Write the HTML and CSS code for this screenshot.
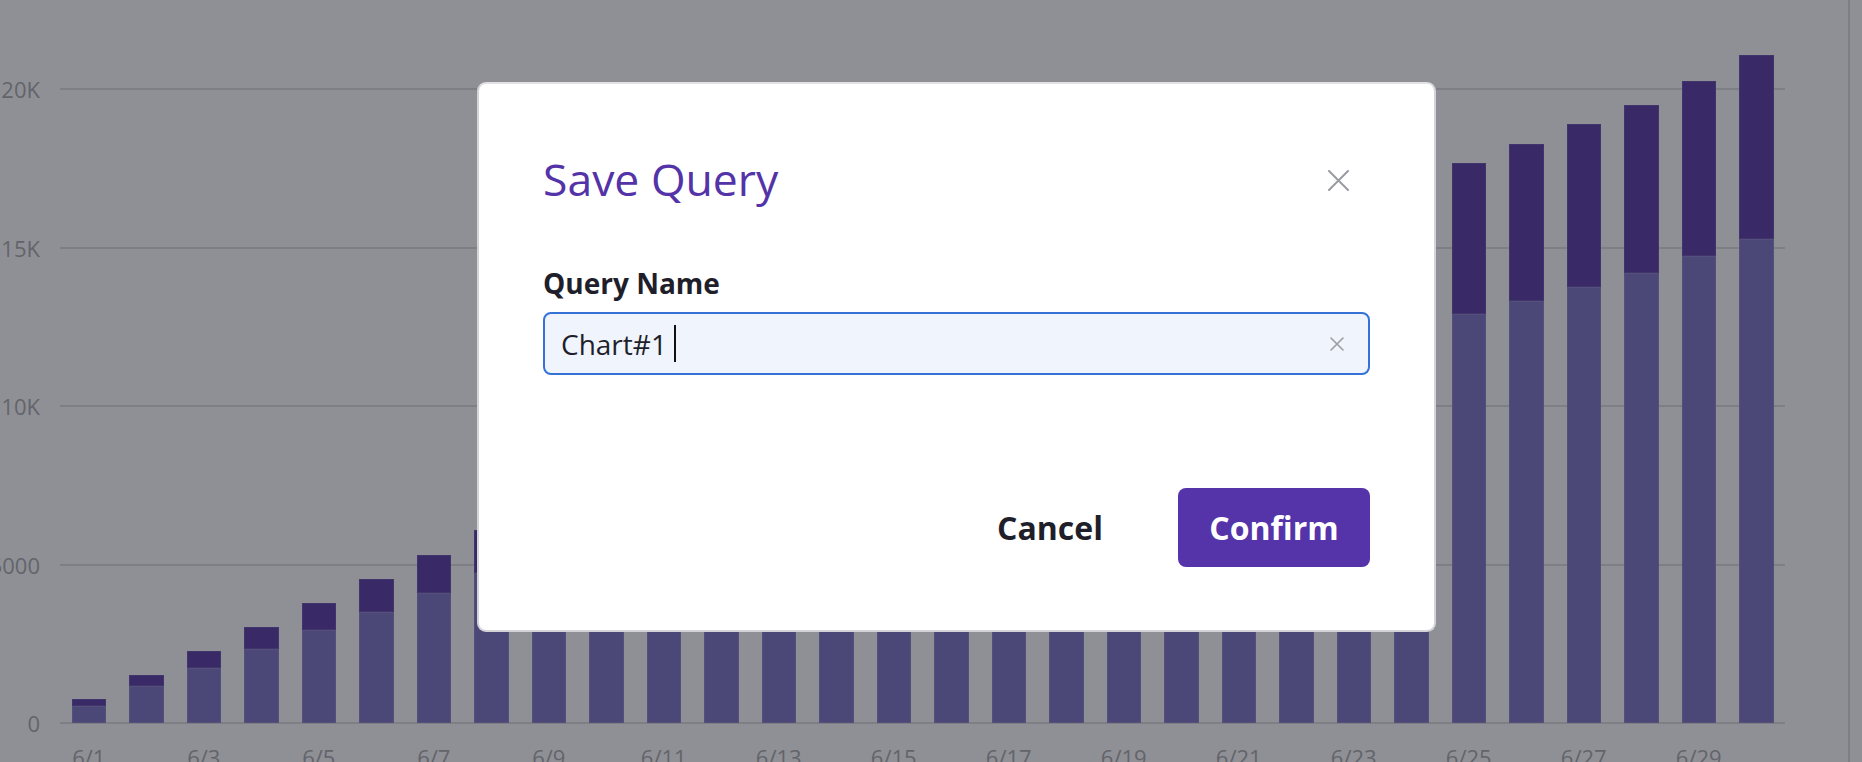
FILE: index.html
```html
<!DOCTYPE html>
<html lang="en">
<head>
<meta charset="utf-8">
<title>Save Query</title>
<link rel="stylesheet" href="styles.css">
</head>
<body>
<div class="chart">
  <div class="y-axis">
    <div class="y-label">20K</div>
    <div class="y-label">15K</div>
    <div class="y-label">10K</div>
    <div class="y-label">5000</div>
    <div class="y-label">0</div>
  </div>
  <div class="plot-wrap">
    <div class="plot">
      <div class="gridlines">
        <div class="gridline"></div>
        <div class="gridline"></div>
        <div class="gridline"></div>
        <div class="gridline"></div>
        <div class="gridline"></div>
      </div>
      <div class="bars">
        <div class="bar" style="height:24px"><div class="seg-top"></div><div class="seg-low" style="height:17px"></div></div>
        <div class="bar" style="height:48px"><div class="seg-top"></div><div class="seg-low" style="height:37px"></div></div>
        <div class="bar" style="height:72px"><div class="seg-top"></div><div class="seg-low" style="height:55px"></div></div>
        <div class="bar" style="height:96px"><div class="seg-top"></div><div class="seg-low" style="height:74px"></div></div>
        <div class="bar" style="height:120px"><div class="seg-top"></div><div class="seg-low" style="height:93px"></div></div>
        <div class="bar" style="height:144px"><div class="seg-top"></div><div class="seg-low" style="height:111px"></div></div>
        <div class="bar" style="height:168px"><div class="seg-top"></div><div class="seg-low" style="height:130px"></div></div>
        <div class="bar" style="height:193px"><div class="seg-top"></div><div class="seg-low" style="height:150px"></div></div>
        <div class="bar" style="height:215px"><div class="seg-top"></div><div class="seg-low" style="height:165px"></div></div>
        <div class="bar" style="height:236px"><div class="seg-top"></div><div class="seg-low" style="height:180px"></div></div>
        <div class="bar" style="height:258px"><div class="seg-top"></div><div class="seg-low" style="height:196px"></div></div>
        <div class="bar" style="height:280px"><div class="seg-top"></div><div class="seg-low" style="height:211px"></div></div>
        <div class="bar" style="height:301px"><div class="seg-top"></div><div class="seg-low" style="height:226px"></div></div>
        <div class="bar" style="height:323px"><div class="seg-top"></div><div class="seg-low" style="height:241px"></div></div>
        <div class="bar" style="height:344px"><div class="seg-top"></div><div class="seg-low" style="height:257px"></div></div>
        <div class="bar" style="height:366px"><div class="seg-top"></div><div class="seg-low" style="height:272px"></div></div>
        <div class="bar" style="height:388px"><div class="seg-top"></div><div class="seg-low" style="height:287px"></div></div>
        <div class="bar" style="height:409px"><div class="seg-top"></div><div class="seg-low" style="height:302px"></div></div>
        <div class="bar" style="height:431px"><div class="seg-top"></div><div class="seg-low" style="height:317px"></div></div>
        <div class="bar" style="height:452px"><div class="seg-top"></div><div class="seg-low" style="height:333px"></div></div>
        <div class="bar" style="height:474px"><div class="seg-top"></div><div class="seg-low" style="height:348px"></div></div>
        <div class="bar" style="height:496px"><div class="seg-top"></div><div class="seg-low" style="height:363px"></div></div>
        <div class="bar" style="height:517px"><div class="seg-top"></div><div class="seg-low" style="height:378px"></div></div>
        <div class="bar" style="height:539px"><div class="seg-top"></div><div class="seg-low" style="height:394px"></div></div>
        <div class="bar" style="height:560px"><div class="seg-top"></div><div class="seg-low" style="height:409px"></div></div>
        <div class="bar" style="height:579px"><div class="seg-top"></div><div class="seg-low" style="height:422px"></div></div>
        <div class="bar" style="height:599px"><div class="seg-top"></div><div class="seg-low" style="height:436px"></div></div>
        <div class="bar" style="height:618px"><div class="seg-top"></div><div class="seg-low" style="height:450px"></div></div>
        <div class="bar" style="height:642px"><div class="seg-top"></div><div class="seg-low" style="height:467px"></div></div>
        <div class="bar" style="height:668px"><div class="seg-top"></div><div class="seg-low" style="height:484px"></div></div>
      </div>
    </div>
    <div class="x-axis">
      <div class="x-label">6/1</div><div class="x-label"></div>
      <div class="x-label">6/3</div><div class="x-label"></div>
      <div class="x-label">6/5</div><div class="x-label"></div>
      <div class="x-label">6/7</div><div class="x-label"></div>
      <div class="x-label">6/9</div><div class="x-label"></div>
      <div class="x-label">6/11</div><div class="x-label"></div>
      <div class="x-label">6/13</div><div class="x-label"></div>
      <div class="x-label">6/15</div><div class="x-label"></div>
      <div class="x-label">6/17</div><div class="x-label"></div>
      <div class="x-label">6/19</div><div class="x-label"></div>
      <div class="x-label">6/21</div><div class="x-label"></div>
      <div class="x-label">6/23</div><div class="x-label"></div>
      <div class="x-label">6/25</div><div class="x-label"></div>
      <div class="x-label">6/27</div><div class="x-label"></div>
      <div class="x-label">6/29</div><div class="x-label"></div>
    </div>
  </div>
  <div class="v-rule"></div>
</div>

<div class="backdrop">
  <div class="dialog" role="dialog" aria-labelledby="dlg-title">
    <div class="dialog-header">
      <h2 class="dialog-title" id="dlg-title">Save Query</h2>
      <button class="close-btn" aria-label="Close">
        <svg width="21" height="21" viewBox="0 0 21 21"><path d="M1 1 L20 20 M20 1 L1 20" stroke="#9b9ca2" stroke-width="2" stroke-linecap="round" fill="none"/></svg>
      </button>
    </div>
    <div class="field-label">Query Name</div>
    <div class="text-input">
      <span class="input-value">Chart#1&nbsp;</span><span class="caret"></span>
      <span class="input-spacer"></span>
      <svg class="clear-icon" width="14" height="14" viewBox="0 0 14 14"><path d="M1 1 L13 13 M13 1 L1 13" stroke="#9c9ca3" stroke-width="1.6" stroke-linecap="round" fill="none"/></svg>
    </div>
    <div class="dialog-footer">
      <button class="btn btn-cancel">Cancel</button>
      <button class="btn btn-confirm">Confirm</button>
    </div>
  </div>
</div>
</body>
</html>
```

FILE: styles.css
```css
html, body {
  margin: 0;
  padding: 0;
}

body {
  width: 1862px;
  height: 762px;
  overflow: hidden;
  background: #ffffff;
  font-family: "Open Sans", "Noto Sans", sans-serif;
}

.chart {
  display: flex;
  height: 762px;
}

.y-axis {
  width: 40px;
  flex: none;
  margin-top: 74px;
  height: 664px;
  display: flex;
  flex-direction: column;
  justify-content: space-between;
  margin-right: 20px;
}

.y-label {
  height: 30px;
  line-height: 30px;
  font-size: 22px;
  color: #a6a7ab;
  display: flex;
  justify-content: flex-end;
  white-space: nowrap;
}

.plot-wrap {
  width: 1725px;
  flex: none;
  display: flex;
  flex-direction: column;
}

.plot {
  margin-top: 89px;
  height: 634px;
  flex: none;
  display: grid;
  grid-template-rows: 634px;
  grid-template-columns: 100%;
}

.gridlines,
.bars {
  grid-area: 1 / 1;
  min-height: 0;
}

.gridlines {
  display: flex;
  flex-direction: column;
  justify-content: space-between;
  margin: -1px 0;
}

.gridline {
  height: 2px;
  background: #dcdddf;
}

.bars {
  display: grid;
  grid-template-columns: repeat(30, 1fr);
  grid-template-rows: 634px;
  align-items: end;
}

.bar {
  width: 34.5px;
  justify-self: center;
  align-self: end;
  display: flex;
  flex-direction: column;
}

.seg-top {
  flex: 1;
  background: #5231a0;
  box-shadow: inset 0 0 0 1px #6548ad;
}

.seg-low {
  flex: none;
  background: #766fc4;
  box-shadow: inset 0 0 0 1px #8680cc;
}

.x-axis {
  margin-top: 19px;
  display: grid;
  grid-template-columns: repeat(30, 1fr);
}

.x-label {
  height: 30px;
  line-height: 30px;
  font-size: 22px;
  color: #a6a7ab;
  text-align: center;
  white-space: nowrap;
}

.v-rule {
  flex: none;
  width: 2px;
  margin-left: 63px;
  background: #dcdddf;
}

/* Modal */
.backdrop {
  position: fixed;
  inset: 0;
  background: rgba(32, 33, 44, 0.5);
}

.dialog {
  position: absolute;
  left: 477px;
  top: 82px;
  width: 959px;
  box-sizing: border-box;
  padding: 65px 64px 63px;
  background: #ffffff;
  border: 2px solid #d4d4d8;
  border-top-color: #e2e2e5;
  border-radius: 9px;
}

.dialog-header {
  display: flex;
  align-items: center;
  justify-content: space-between;
}

.dialog-title {
  margin: 0;
  font-size: 44.5px;
  font-weight: 400;
  line-height: 60px;
  color: #5433a8;
}

.close-btn {
  border: 0;
  padding: 0;
  margin: 2px 21px 0 0;
  background: none;
  width: 21px;
  height: 21px;
  display: flex;
}

.field-label {
  margin-top: 55px;
  font-size: 28px;
  font-weight: 700;
  line-height: 38px;
  color: #1f1f2b;
}

.text-input {
  margin-top: 10px;
  height: 63px;
  box-sizing: border-box;
  border: 2px solid #3472d8;
  border-radius: 8px;
  background: #f0f4fc;
  display: flex;
  align-items: center;
  padding: 0 24px 0 16px;
}

.input-value {
  font-size: 28px;
  line-height: 38px;
  color: #1f1f2b;
  white-space: pre;
}

.caret {
  width: 2px;
  height: 37px;
  background: #111111;
}

.input-spacer {
  flex: 1;
}

.clear-icon {
  flex: none;
}

.dialog-footer {
  margin-top: 113px;
  display: flex;
  justify-content: flex-end;
  gap: 32px;
}

.btn {
  width: 192px;
  height: 79px;
  border: 0;
  border-radius: 8px;
  font-family: "Open Sans", "Noto Sans", sans-serif;
  font-size: 32px;
  font-weight: 700;
  padding: 0;
  cursor: pointer;
}

.btn-cancel {
  background: transparent;
  color: #1f1f2b;
}

.btn-confirm {
  background: #5533a9;
  color: #ffffff;
}
```
